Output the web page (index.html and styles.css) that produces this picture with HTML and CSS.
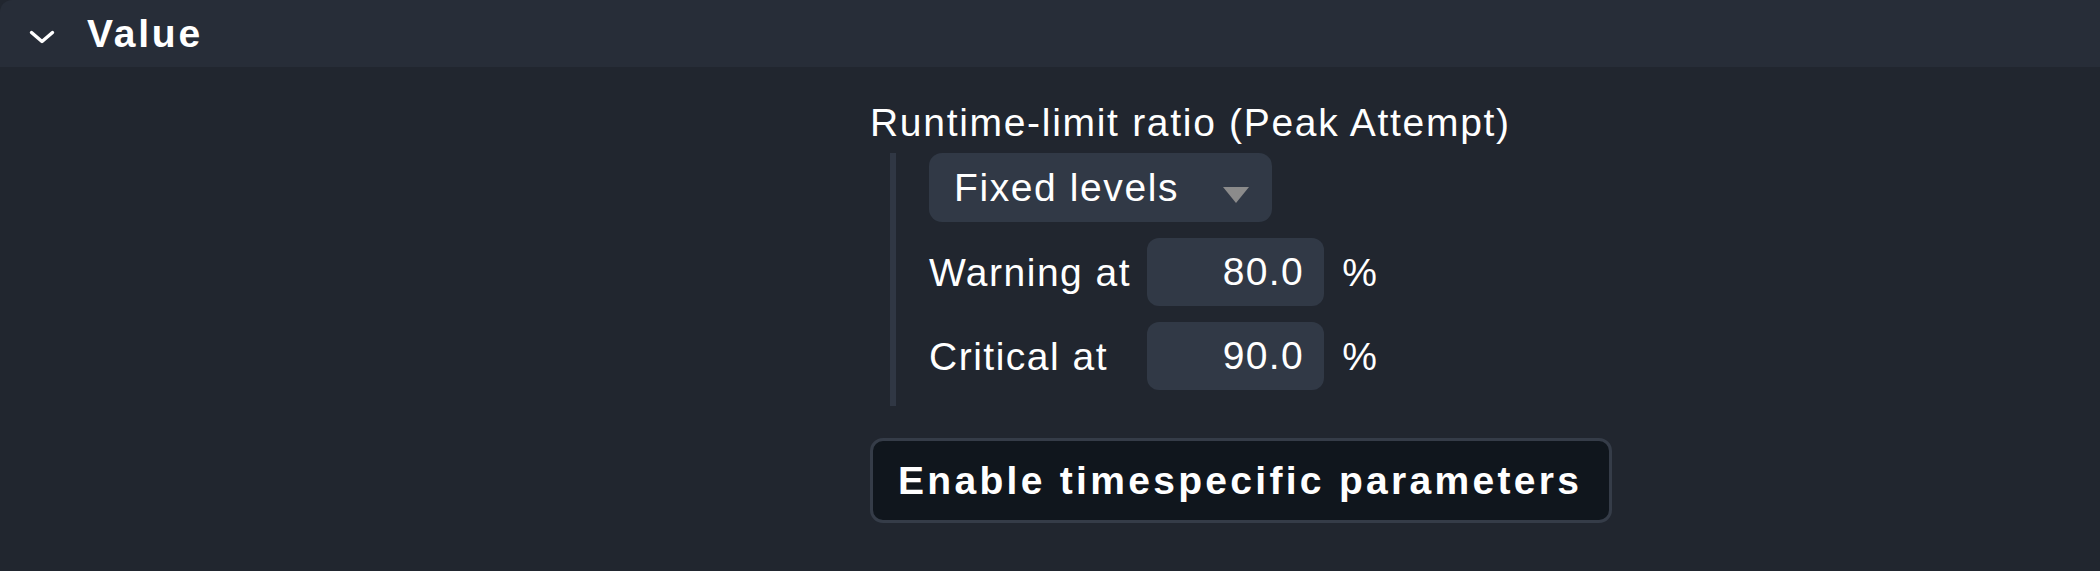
FILE: index.html
```html
<!DOCTYPE html>
<html>
<head>
<meta charset="utf-8">
<link rel="stylesheet" href="styles.css">
</head>
<body>
<div class="section">
  <div class="section-head">
    <svg class="chevron" width="26" height="14" viewBox="0 0 26 14"><polyline points="2.5,2.5 13,11.5 23.5,2.5" fill="none" stroke="#ffffff" stroke-width="3.4" stroke-linecap="round" stroke-linejoin="round"/></svg>
    <span class="section-title">Value</span>
  </div>
  <div class="section-body">
    <div class="value-col">
      <div class="field-title">Runtime-limit ratio (Peak Attempt)</div>
      <div class="nested">
        <div class="select">
          <span class="select-text">Fixed levels</span>
          <span class="select-arrow"></span>
        </div>
        <div class="levels">
          <span class="lvl-label">Warning at</span>
          <span class="num-input">80.0</span>
          <span class="unit">%</span>
          <span class="lvl-label">Critical at</span>
          <span class="num-input">90.0</span>
          <span class="unit">%</span>
        </div>
      </div>
      <div class="btn-row">
        <button class="btn">Enable timespecific parameters</button>
      </div>
    </div>
  </div>
</div>
</body>
</html>
```

FILE: styles.css
```css
html, body {
  margin: 0;
  padding: 0;
}
body {
  background: #21262f;
  color: #ffffff;
  font-family: "Liberation Sans", Arial, sans-serif;
  font-size: 39px;
  width: 2100px;
  height: 571px;
  overflow: hidden;
}
.section-head {
  height: 67px;
  background: #272d38;
  border-top-left-radius: 12px;
  display: flex;
  align-items: center;
}
.chevron {
  display: block;
  margin-left: 29px;
  margin-top: 7px;
  flex: none;
}
.section-title {
  margin-left: 32px;
  font-weight: bold;
  letter-spacing: 2.8px;
  line-height: 67px;
}
.section-body {
  padding: 33px 0 0 870px;
}
.value-col {
  display: flex;
  flex-direction: column;
  align-items: flex-start;
}
.field-title {
  line-height: 45px;
  letter-spacing: 1.7px;
}
.nested {
  margin-top: 8px;
  margin-left: 20px;
  border-left: 6px solid #303744;
  padding: 0 0 16px 33px;
  display: flex;
  flex-direction: column;
  gap: 16px;
}
.select {
  width: 343px;
  height: 69px;
  box-sizing: border-box;
  background: #313946;
  border-radius: 13px;
  display: flex;
  align-items: center;
  justify-content: space-between;
  padding: 0 23px 0 25px;
}
.select-text {
  line-height: 45px;
  letter-spacing: 1.6px;
}
.select-arrow {
  width: 0;
  height: 0;
  border-left: 13px solid transparent;
  border-right: 13px solid transparent;
  border-top: 16px solid #8b8b8b;
  margin-top: 14px;
}
.levels {
  display: grid;
  grid-template-columns: auto auto auto;
  column-gap: 16px;
  row-gap: 16px;
  align-items: center;
}
.lvl-label {
  line-height: 45px;
  letter-spacing: 1.5px;
}
.num-input {
  width: 177px;
  height: 68px;
  box-sizing: border-box;
  background: #313946;
  border-radius: 12px;
  text-align: right;
  padding-right: 20px;
  line-height: 68px;
  letter-spacing: 1.4px;
}
.unit {
  line-height: 45px;
  padding-left: 2px;
}
.btn-row {
  margin-top: 32px;
}
.btn {
  font-family: "Liberation Sans", Arial, sans-serif;
  font-size: 39px;
  font-weight: bold;
  letter-spacing: 3.3px;
  color: #ffffff;
  background: #10161d;
  border: 3px solid #353c48;
  border-radius: 13px;
  padding: 17px 27px 17px 25px;
  line-height: 45px;
  margin: 0;
  cursor: pointer;
}
```
